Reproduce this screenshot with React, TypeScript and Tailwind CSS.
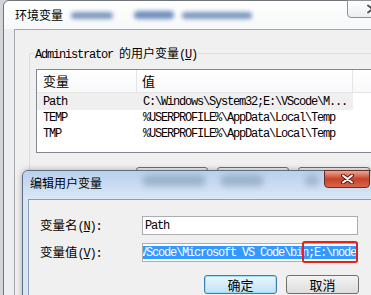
import React from "react";

const mono = "font-['Liberation_Mono','Noto_Sans_CJK_SC',monospace] text-[12px] tracking-[-1.2px] text-black";
const cjk = "font-['Noto_Sans_CJK_SC',sans-serif] tracking-normal";

function CloseGlyph({ stroke, fill }: { stroke: string; fill: string }) {
  return (
    <svg width="13" height="10" viewBox="0 0 13 10">
      <path d="M2 1.5 L11 8.5 M11 1.5 L2 8.5" stroke={stroke} strokeWidth="4" strokeLinecap="round" />
      <path d="M2 1.5 L11 8.5 M11 1.5 L2 8.5" stroke={fill} strokeWidth="2" strokeLinecap="round" />
    </svg>
  );
}

function Row({ name, value, active }: { name: string; value: string; active?: boolean }) {
  return (
    <div className={`flex items-center w-[316px] ${active ? "h-[17px] bg-[#efefef]" : "h-[16px]"}`}>
      <div className={`w-[100px] pl-[6px] ${mono}`}>{name}</div>
      <div className={`pl-[6px] whitespace-nowrap ${mono}`}>{value}</div>
    </div>
  );
}

export default function App() {
  return (
    <div className="relative w-[371px] h-[295px] overflow-hidden bg-[#d2d4d7]">
      {/* back window: 环境变量 */}
      <div className="ml-[3px] w-[396px] h-[300px] flex flex-col border border-[#6f747a] rounded-tl-[6px] bg-[#eceef1]">
        <div className="relative h-[28px] flex items-start bg-gradient-to-b from-[#ffffff] to-[#f7f8f9] rounded-tl-[6px]">
          <span className={`mt-[6px] ml-[11px] text-[12px] leading-[16px] text-black ${cjk}`}>环境变量</span>
          <div className="absolute left-[67px] top-[11px] w-[42px] h-[7px] rounded-full bg-[#7d98bf] blur-[2px]" />
          <div className="absolute left-[130px] top-[10px] w-[40px] h-[8px] rounded-full bg-[#6f8fbd] blur-[2px]" />
          <div className="absolute left-[178px] top-[11px] w-[70px] h-[7px] rounded-full bg-[#7c98c0] blur-[2px]" />
          <div className="ml-auto mr-[7px] w-[44px] h-[18px] -mt-[1px] flex items-center pl-[18px] border border-[#8e9297] rounded-bl-[4px] rounded-br-[4px] bg-gradient-to-b from-[#ffffff] to-[#eceef0]">
            <CloseGlyph stroke="#ffffff" fill="#505459" />
          </div>
        </div>

        <div className="mx-[10px] flex-1 border border-[#a3a8ae] bg-[#f0f0f0]">
          <div className="ml-[14px] mt-[23px] w-[400px] h-[200px] border-t border-l border-[#d5dfe5] rounded-tl-[3px]">
            <div className={`-mt-[9px] ml-[4px] w-fit px-[1px] h-[16px] leading-[16px] bg-[#f0f0f0] whitespace-nowrap ${mono}`}>
              Administrator <span className={`text-[12px] ${cjk}`}>的用户变量</span>(<span className="underline underline-offset-1">U</span>)
            </div>

            <div className="ml-[6px] mt-[8px] w-[345px] h-[84px] border border-[#828790] bg-white">
              <div className="h-[23px] flex border-b border-[#e5e5e5] bg-gradient-to-b from-[#ffffff] to-[#f7f8fa]">
                <div className={`w-[100px] pl-[6px] border-r border-[#e5e5e5] text-[13px] leading-[22px] text-black ${cjk}`}>变量</div>
                <div className={`w-[216px] pl-[5px] border-r border-[#e5e5e5] text-[13px] leading-[22px] text-black ${cjk}`}>值</div>
                <div className="flex-1" />
              </div>
              <Row name="Path" value={"C:\\Windows\\System32;E:\\VScode\\M..."} active />
              <Row name="TEMP" value={"%USERPROFILE%\\AppData\\Local\\Temp"} />
              <Row name="TMP" value={"%USERPROFILE%\\AppData\\Local\\Temp"} />
            </div>

            <div className="ml-[106px] mt-[14px] flex gap-[9px]">
              {["新建(W)...", "编辑(E)...", "删除(L)"].map((t) => (
                <div key={t} className={`w-[72px] h-[23px] flex items-center justify-center border border-[#707070] rounded-[3px] bg-gradient-to-b from-[#f2f2f2] to-[#dcdcdc] text-[12px] ${cjk}`}>
                  {t}
                </div>
              ))}
            </div>
          </div>
        </div>
      </div>

      {/* front dialog: 编辑用户变量 */}
      <div className="absolute left-[22px] top-[170px] w-[360px] h-[130px] flex flex-col border border-[#5d6e84] rounded-tl-[6px] bg-[#d9e5f3] shadow-[0_0_6px_rgba(0,0,0,0.3)]">
        <div className="relative h-[28px] flex items-start rounded-tl-[6px] bg-gradient-to-b from-[#b9d0ec] to-[#dae7f6]">
          <div className="absolute left-[120px] top-[4px] w-[62px] h-[11px] rounded-[4px] bg-[#8ba1bb] blur-[3px] opacity-70" />
          <div className="absolute left-[198px] top-[4px] w-[42px] h-[11px] rounded-[4px] bg-[#8ba1bb] blur-[3px] opacity-70" />
          <div className="absolute left-[282px] top-[4px] w-[14px] h-[11px] rounded-[4px] bg-[#8ba1bb] blur-[3px] opacity-60" />
          <span className={`relative mt-[4px] ml-[7px] text-[12px] leading-[16px] text-black ${cjk}`}>编辑用户变量</span>
          <div className="relative ml-auto mr-[11px] -mt-[1px] w-[46px] h-[18px] flex items-center justify-center border border-[#6b2a22] rounded-bl-[4px] rounded-br-[4px] bg-gradient-to-b from-[#e7a796] via-[#c7402a] to-[#d9654c]">
            <CloseGlyph stroke="#5a1b12" fill="#ffffff" />
          </div>
        </div>

        <div className="mx-[5px] flex-1 border border-[#8a9db6] bg-[#f0f0f0]">
          <div className="mt-[16px] flex items-center h-[19px]">
            <div className={`w-[113px] pl-[11px] whitespace-nowrap ${mono}`}>
              <span className={`text-[12.5px] ${cjk}`}>变量名</span>(<span className="underline underline-offset-1">N</span>):
            </div>
            <div className={`w-[216px] h-[19px] flex items-center pl-[2px] border border-[#abadb3] bg-white ${mono}`}>Path</div>
          </div>

          <div className="mt-[8px] flex items-center h-[19px]">
            <div className={`w-[113px] pl-[11px] whitespace-nowrap ${mono}`}>
              <span className={`text-[12.5px] ${cjk}`}>变量值</span>(<span className="underline underline-offset-1">V</span>):
            </div>
            <div className="relative w-[216px] h-[19px] border border-[#abadb3] bg-white">
              <div className="h-full flex items-center overflow-hidden">
                <div className={`w-full h-[13px] flex items-center bg-[#3399ff] whitespace-nowrap ${mono} !text-white`}>
                  <span className="-ml-[3px]">{"VScode\\Microsoft VS Code\\bin;E:\\node"}</span>
                </div>
              </div>
              <div className="absolute left-[159px] -top-[3px] w-[56px] h-[22px] border-2 border-[#e3231b] rounded-[3px]" />
            </div>
          </div>

          <div className="ml-[175px] mt-[13px] flex gap-[9px]">
            <div className={`w-[73px] h-[19px] flex items-center justify-center border border-[#3c7fb1] rounded-[3px] bg-gradient-to-b from-[#eaf6fd] to-[#bfe3f8] shadow-[inset_0_0_0_1px_#9fdcf7] text-[13px] text-black ${cjk}`}>确定</div>
            <div className={`w-[73px] h-[19px] flex items-center justify-center border border-[#707070] rounded-[3px] bg-gradient-to-b from-[#f4f4f4] to-[#dcdcdc] text-[13px] text-black ${cjk}`}>取消</div>
          </div>
        </div>
      </div>
    </div>
  );
}
